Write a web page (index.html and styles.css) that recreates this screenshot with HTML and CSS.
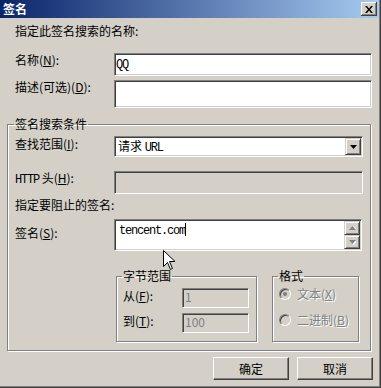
FILE: index.html
```html
<!DOCTYPE html>
<html>
<head>
<meta charset="utf-8">
<title>签名</title>
<link rel="stylesheet" href="styles.css">
</head>
<body>
<div class="window">
    <div class="titlebar">
        <span class="title">签名</span>
        <span class="close"><svg width="8" height="7" viewBox="0 0 8 7"><path d="M0 0h2l2 2.4 2-2.4h2l-3 3.5 3 3.5h-2l-2-2.4-2 2.4h-2l3-3.5z" fill="#000"/></svg></span>
    </div>
    <div class="content">
        <div class="caption">指定此签名搜索的名称:</div>
        <div class="row r-name">
            <label>名称(<u>N</u>):</label>
            <div class="edit wide"><span class="lat">QQ</span></div>
        </div>
        <div class="row r-desc">
            <label>描述(可选)(<u>D</u>):</label>
            <div class="edit wide tall"></div>
        </div>

        <fieldset class="group main">
            <legend>签名搜索条件</legend>
            <div class="row r-scope">
                <label>查找范围(<u>I</u>):</label>
                <div class="combo">
                    <span class="combo-text">请求 <span class="lat">URL</span></span>
                    <span class="dd"><svg width="7" height="4" viewBox="0 0 7 4"><path d="M0 0h7l-3.5 4z" fill="#000"/></svg></span>
                </div>
            </div>
            <div class="row r-http">
                <label><span class="lat">HTTP</span> 头(<u>H</u>):</label>
                <div class="edit off mid"></div>
            </div>
            <div class="caption inner">指定要阻止的签名:</div>
            <div class="row r-sign">
                <label>签名(<u>S</u>):</label>
                <div class="edit memo">
                    <span class="memo-text"><span class="lat">tencent.com</span><span class="caret"></span></span>
                    <span class="vscroll">
                        <span class="sb"><svg width="7" height="5" viewBox="0 0 7 5"><path d="M1 4h7l-3.5-4z" fill="#fff"/><path d="M0 4h7l-3.5-4z" fill="#808080"/></svg></span>
                        <span class="sb"><svg width="7" height="5" viewBox="0 0 7 5"><path d="M1 1h7l-3.5 4z" fill="#fff"/><path d="M0 0h7l-3.5 4z" fill="#808080"/></svg></span>
                    </span>
                </div>
            </div>
            <div class="subs">
                <fieldset class="group sub bytes">
                    <legend>字节范围</legend>
                    <div class="row r-from">
                        <label>从(<u>F</u>):</label>
                        <div class="edit off small">1</div>
                    </div>
                    <div class="row r-to">
                        <label>到(<u>T</u>):</label>
                        <div class="edit off small">100</div>
                    </div>
                </fieldset>
                <fieldset class="group sub fmt">
                    <legend>格式</legend>
                    <div class="opt first"><span class="radio on"></span><span class="dim">文本(<u>X</u>)</span></div>
                    <div class="opt"><span class="radio"></span><span class="dim">二进制(<u>B</u>)</span></div>
                </fieldset>
            </div>
        </fieldset>

        <div class="buttons">
            <span class="btn">确定</span>
            <span class="btn">取消</span>
        </div>
    </div>
    <svg class="cursor" width="13" height="21" viewBox="0 0 13 21"><path d="M0.5 0.5v16l4-4 3 7 2-1-3-7h5.5z" fill="#fff" stroke="#000" stroke-width="1"/></svg>
</div>
</body>
</html>
```
FILE: styles.css
```css
@charset "utf-8";
body {
    margin: 0;
    background: #d4d0c8;
    font-family: "Noto Sans CJK SC", sans-serif;
    font-size: 12px;
    line-height: 14px;
    color: #000;
}
.window {
    position: relative;
    width: 381px;
    height: 388px;
    box-sizing: border-box;
    overflow: hidden;
    box-shadow: inset -1px -1px #404040, inset -2px -2px #808080;
}
.titlebar {
    width: 379px;
    height: 18px;
    display: flex;
    align-items: center;
    justify-content: space-between;
    background: linear-gradient(to right, #0a246a, #a6caf0);
}
.title {
    color: #fff;
    font-weight: bold;
    padding-left: 3px;
}
.close {
    width: 16px;
    height: 14px;
    margin-right: 2px;
    display: flex;
    align-items: center;
    justify-content: center;
    background: #d4d0c8;
    box-shadow: inset -1px -1px #404040, inset 1px 1px #fff, inset -2px -2px #808080;
}
.content {
    padding-top: 6px;
    padding-right: 8px;
}
.caption {
    height: 14px;
    padding-left: 15px;
}
.caption.inner {
    padding-left: 0;
    margin-top: 4px;
}
.row {
    display: flex;
    align-items: flex-start;
}
.row label {
    width: 99px;
    flex: none;
}
.lat {
    font-family: "Liberation Mono", monospace;
    font-size: 12px;
    letter-spacing: -1.2px;
}
u {
    text-decoration: underline;
}

/* sunken edit boxes */
.edit {
    box-sizing: border-box;
    height: 23px;
    padding: 2px 2px 0 1px;
    background: #fff;
    border: 1px solid;
    border-color: #808080 #fff #fff #808080;
    box-shadow: inset 1px 1px #404040, inset -1px -1px #d4d0c8;
}
.edit.off {
    background: #d4d0c8;
    color: #808080;
}
.wide {
    width: 258px;
}
.tall {
    height: 28px;
}
.mid {
    width: 249px;
}
.r-name {
    margin-top: 15px;
    padding-left: 15px;
}
.r-desc {
    margin-top: 4px;
    padding-left: 15px;
}

/* group boxes */
.group {
    margin: 0;
    min-width: 0;
    box-sizing: border-box;
    border: 1px solid #808080;
    box-shadow: 1px 1px #fff, inset 1px 1px #fff;
}
.group legend {
    padding: 0 1px;
    margin-left: -1px;
    line-height: 14px;
}
.main {
    margin: 9px 0 0 7px;
    width: 364px;
    height: 234px;
    padding: 0 0 0 7px;
}
.r-scope {
    margin-top: 5px;
}
.r-scope label {
    padding-top: 1px;
}
.combo {
    box-sizing: border-box;
    width: 249px;
    height: 21px;
    padding: 1px;
    display: flex;
    background: #fff;
    border: 1px solid;
    border-color: #808080 #fff #fff #808080;
    box-shadow: inset 1px 1px #404040, inset -1px -1px #d4d0c8;
}
.combo-text {
    flex: 1;
    padding: 1px 0 0 2px;
}
.dd, .sb {
    width: 16px;
    flex: none;
    display: flex;
    align-items: center;
    justify-content: center;
    background: #d4d0c8;
    box-sizing: border-box;
    border: 1px solid;
    border-color: #d4d0c8 #404040 #404040 #d4d0c8;
    box-shadow: inset 1px 1px #fff, inset -1px -1px #808080;
}
.r-http {
    margin-top: 14px;
}
.r-sign {
    margin-top: 7px;
}
.r-sign label {
    padding-top: 7px;
}
.memo {
    width: 248px;
    height: 32px;
    padding: 1px;
    display: flex;
}
.memo-text {
    flex: 1;
    padding: 1px 0 0 3px;
}
.caret {
    display: inline-block;
    width: 1px;
    height: 13px;
    background: #000;
    vertical-align: -2px;
}
.vscroll {
    display: flex;
    flex-direction: column;
}
.sb {
    height: 14px;
}

/* lower group boxes */
.subs {
    display: flex;
    margin-top: 18px;
}
.sub {
    height: 73px;
    padding: 0 0 0 6px;
}
.bytes {
    width: 141px;
    margin-left: 101px;
}
.fmt {
    width: 87px;
    margin-left: 15px;
}
.bytes label {
    width: 59px;
    padding-top: 1px;
}
.small {
    width: 67px;
    height: 20px;
    padding: 1px 0 0 2px;
}
.r-from {
    margin-top: 5px;
}
.r-to {
    margin-top: 5px;
}
.opt {
    display: flex;
    align-items: center;
    gap: 6px;
    margin-top: 12px;
}
.opt.first {
    margin-top: 4px;
}
.radio {
    position: relative;
    width: 12px;
    height: 12px;
    box-sizing: border-box;
    border-radius: 50%;
    border: 1px solid;
    border-color: #808080 #fff #fff #808080;
    box-shadow: inset 1px 1px #404040;
    background: #d4d0c8;
    display: flex;
    align-items: center;
    justify-content: center;
}
.radio.on::after {
    content: "";
    width: 4px;
    height: 4px;
    border-radius: 50%;
    background: #808080;
}
.dim {
    color: #808080;
    text-shadow: 1px 1px #fff;
}

/* dialog buttons */
.buttons {
    display: flex;
    justify-content: flex-end;
    gap: 8px;
    margin-top: 6px;
}
.btn {
    width: 76px;
    height: 23px;
    box-sizing: border-box;
    display: flex;
    align-items: center;
    justify-content: center;
    background: #d4d0c8;
    border: 1px solid;
    border-color: #fff #404040 #404040 #fff;
    box-shadow: inset -1px -1px #808080;
}
.cursor {
    position: absolute;
    left: 163px;
    top: 250px;
}
```
